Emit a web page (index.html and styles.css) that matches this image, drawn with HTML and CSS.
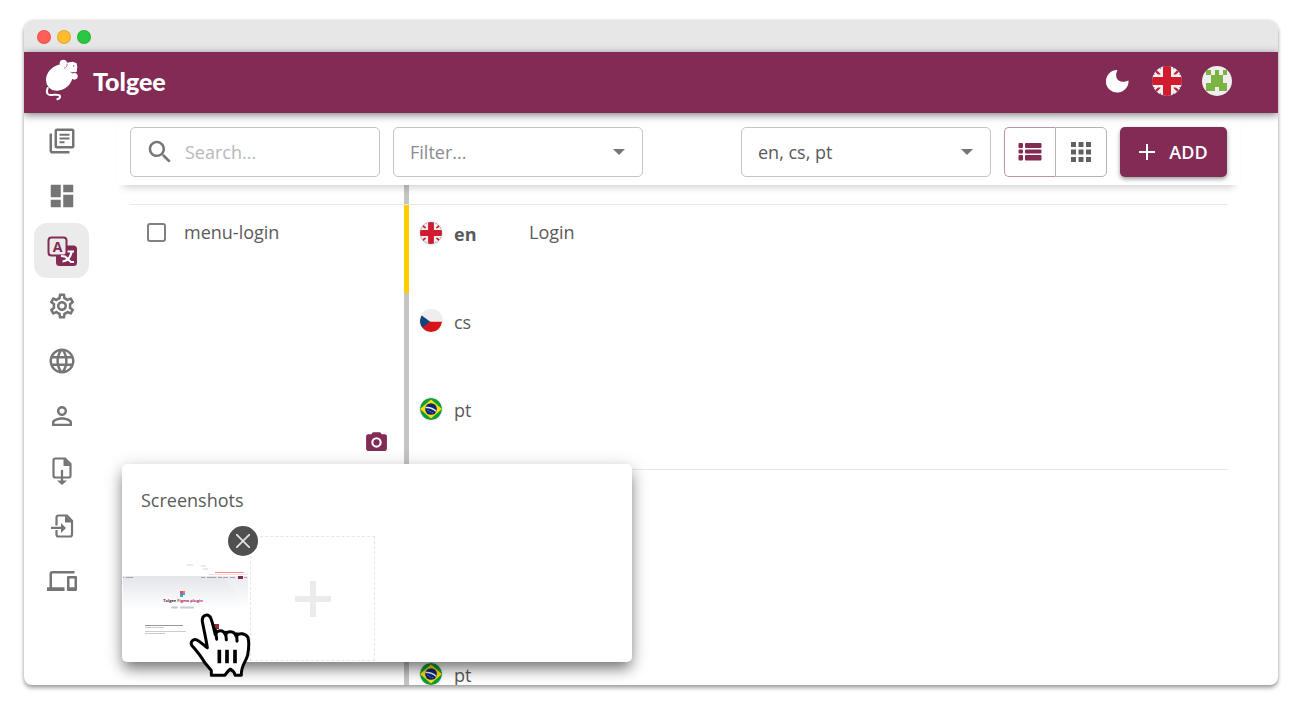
FILE: index.html
```html
<!DOCTYPE html>
<html lang="en">
<head>
<meta charset="utf-8">
<title>Tolgee</title>
<link rel="stylesheet" href="styles.css">
</head>
<body>
<svg class="defs" aria-hidden="true">
  <defs>
    <clipPath id="round"><circle cx="15" cy="15" r="15"/></clipPath>
    <symbol id="flag-gb" viewBox="0 0 30 30">
      <g clip-path="url(#round)">
        <rect width="30" height="30" fill="#0b3082"/>
        <path d="M0 0l30 30M30 0L0 30" stroke="#f0f0f0" stroke-width="8"/>
        <path d="M0 1l12 12M30 1L18 13M0 29l12-12M30 29L18 17" stroke="#d01c2e" stroke-width="2.4"/>
        <path d="M15 0v30M0 15h30" stroke="#f0f0f0" stroke-width="13"/>
        <path d="M15 0v30M0 15h30" stroke="#d01c2e" stroke-width="8"/>
      </g>
    </symbol>
    <symbol id="flag-cz" viewBox="0 0 30 30">
      <g clip-path="url(#round)">
        <rect width="30" height="30" fill="#eee"/>
        <path d="M0 16h30v14H0z" fill="#d7141a"/>
        <path d="M2 7l12 9L2 25H0V7z" fill="#11457e"/>
      </g>
    </symbol>
    <symbol id="flag-br" viewBox="0 0 30 30">
      <g clip-path="url(#round)">
        <rect width="30" height="30" fill="#0f9b3b"/>
        <path d="M15 2l15 13-15 13L0 15z" fill="#fedf00"/>
        <circle cx="15" cy="15" r="8" fill="#05247c"/>
        <path d="M7.500 13q8-1 14.500 5" stroke="#eee" stroke-width="2" fill="none"/>
        <path d="M10 17h2M13 19h2M16 20h2" stroke="#8fa0cc" stroke-width="1"/>
      </g>
    </symbol>
  </defs>
</svg>

<div class="window">
  <div class="chrome"><i class="dot red"></i><i class="dot amber"></i><i class="dot green"></i></div>

  <header class="appbar">
    <a class="brand" href="#">
      <svg class="mouse" viewBox="93 147 102 129" aria-hidden="true">
        <ellipse cx="136" cy="203" rx="43" ry="36" transform="rotate(-42 136 203)" fill="#fff"/>
        <path d="M146 168l12-10 18-3 12 5 2 10-2 16-14 2-8 14z" fill="#fff"/>
        <circle cx="148" cy="160" r="11" fill="#fff"/>
        <circle cx="181" cy="199" r="10" fill="#fff"/>
        <path d="M101 234c-6 16 0 23 14 21 12-1 20-3 23 3 1 5-1 8-8 10" fill="none" stroke="#fff" stroke-width="6" stroke-linecap="round"/>
        <path d="M159 161c2 7-3 12-9 14M170 187l12 1" fill="none" stroke="#822b55" stroke-width="2"/>
        <circle cx="179" cy="168" r="2" fill="#822b55"/>
      </svg>
      <span class="wordmark">Tolgee</span>
    </a>
    <div class="account">
      <button class="round-btn" aria-label="Dark mode">
        <svg viewBox="0 0 30 30"><path d="M15.500 4C12 10 15 19 26.500 14.500A11.300 11.300 0 1 1 15.500 4z" fill="#fff"/></svg>
      </button>
      <button class="round-btn" aria-label="Language"><svg viewBox="0 0 30 30"><use href="#flag-gb"/></svg></button>
      <button class="round-btn" aria-label="Account">
        <svg viewBox="0 0 30 30"><circle cx="15" cy="15" r="15" fill="#eee"/><path d="M4 4h5v5h4V4h4v5h4V4h4v5h-4v8h4v8h-8v-4h-4v4H4v-8h5V9H4z" fill="#7cb342"/></svg>
      </button>
    </div>
  </header>

  <div class="body">
    <nav class="sidebar">
      <a href="#" aria-label="Projects"><svg viewBox="0 0 24 24"><g fill="none" stroke="currentColor" stroke-width="2"><rect x="7" y="3" width="14" height="14" rx="1"/><path d="M3 6v13.500q0 1.500 1.500 1.500H18"/><path d="M10 7h8M10 10h8M10 13h4" stroke-width="1.600"/></g></svg></a>
      <a href="#" aria-label="Dashboard"><svg viewBox="0 0 24 24"><path d="M3 13h8V3H3v10zm0 8h8v-6H3v6zm10 0h8V11h-8v10zm0-18v6h8V3h-8z"/></svg></a>
      <a href="#" class="active" aria-label="Translations"><svg viewBox="0 0 30 30"><rect x="9" y="9.500" width="21" height="20.500" rx="3.500"/><rect x="1.500" y="1.500" width="18" height="18" rx="3" fill="#ebebeb" stroke="currentColor" stroke-width="2"/><text class="icon-letter" x="10.500" y="15.500" text-anchor="middle">A</text><path d="M20.500 15.500h6.500M14 20l4 .5 6 5.500h3M24.500 16c-1 5-4 9-9 9.500" fill="none" stroke="#fff" stroke-width="2.200"/></svg></a>
      <a href="#" aria-label="Settings"><svg viewBox="0 0 24 24"><path d="M19.430 12.980c.04-.32.07-.64.07-.98 0-.34-.03-.66-.07-.98l2.110-1.650c.19-.15.24-.42.12-.64l-2-3.460c-.09-.16-.26-.25-.44-.25-.06 0-.12.01-.17.03l-2.490 1c-.52-.4-1.080-.73-1.690-.98l-.38-2.650C14.460 2.180 14.250 2 14 2h-4c-.25 0-.46.18-.49.42l-.38 2.650c-.61.25-1.170.59-1.690.98l-2.490-1c-.06-.02-.12-.03-.18-.03-.17 0-.34.09-.43.25l-2 3.460c-.13.22-.07.49.12.64l2.110 1.650c-.04.32-.07.65-.07.98 0 .33.03.66.07.98l-2.110 1.650c-.19.15-.24.42-.12.64l2 3.460c.09.16.26.25.44.25.06 0 .12-.01.17-.03l2.490-1c.52.4 1.080.73 1.690.98l.38 2.650c.03.24.24.42.49.42h4c.25 0 .46-.18.49-.42l.38-2.650c.61-.25 1.170-.59 1.690-.98l2.490 1c.06.02.12.03.18.03.17 0 .34-.09.43-.25l2-3.460c.12-.22.07-.49-.12-.64l-2.110-1.650zm-1.980-1.710c.04.31.05.52.05.73 0 .21-.02.43-.05.73l-.14 1.130.89.7 1.080.84-.7 1.210-1.270-.51-1.040-.42-.9.68c-.43.32-.84.56-1.250.73l-1.060.43-.16 1.130-.2 1.350h-1.400l-.19-1.350-.16-1.130-1.060-.43c-.43-.18-.83-.41-1.230-.71l-.91-.7-1.060.43-1.270.51-.7-1.210 1.080-.84.89-.7-.14-1.130c-.03-.31-.05-.54-.05-.74s.02-.43.05-.73l.14-1.130-.89-.7-1.080-.84.7-1.210 1.270.51 1.040.42.9-.68c.43-.32.84-.56 1.250-.73l1.060-.43.16-1.130.2-1.350h1.390l.19 1.350.16 1.130 1.060.43c.43.18.83.41 1.230.71l.91.7 1.060-.43 1.270-.51.7 1.210-1.070.85-.89.7.14 1.130zM12 8c-2.210 0-4 1.790-4 4s1.790 4 4 4 4-1.790 4-4-1.790-4-4-4zm0 6c-1.100 0-2-.9-2-2s.9-2 2-2 2 .9 2 2-.9 2-2 2z"/></svg></a>
      <a href="#" aria-label="Languages"><svg viewBox="0 0 24 24"><path d="M11.990 2C6.470 2 2 6.480 2 12s4.470 10 9.990 10C17.520 22 22 17.520 22 12S17.520 2 11.990 2zm6.930 6h-2.950c-.32-1.250-.78-2.450-1.380-3.560 1.840.63 3.370 1.910 4.330 3.560zM12 4.040c.83 1.200 1.480 2.530 1.910 3.960h-3.820c.43-1.430 1.080-2.760 1.910-3.960zM4.260 14C4.100 13.360 4 12.690 4 12s.1-1.360.26-2h3.380c-.08.66-.14 1.320-.14 2 0 .68.06 1.340.14 2H4.260zm.82 2h2.950c.32 1.250.78 2.450 1.380 3.560-1.840-.63-3.370-1.900-4.330-3.560zm2.950-8H5.080c.96-1.660 2.490-2.930 4.330-3.560C8.810 5.550 8.350 6.750 8.030 8zM12 19.960c-.83-1.200-1.480-2.530-1.910-3.960h3.820c-.43 1.430-1.080 2.760-1.910 3.960zM14.340 14H9.660c-.09-.66-.16-1.320-.16-2 0-.68.07-1.350.16-2h4.680c.09.65.16 1.320.16 2 0 .68-.07 1.340-.16 2zm.25 5.560c.6-1.110 1.060-2.310 1.380-3.560h2.950c-.96 1.650-2.490 2.930-4.330 3.560zM16.360 14c.08-.66.14-1.320.14-2 0-.68-.06-1.340-.14-2h3.380c.16.64.26 1.310.26 2s-.1 1.360-.26 2h-3.380z"/></svg></a>
      <a href="#" aria-label="Members"><svg viewBox="0 0 24 24"><path d="M12 5.900c1.160 0 2.100.94 2.100 2.100s-.94 2.100-2.100 2.100S9.900 9.160 9.900 8s.94-2.100 2.100-2.100m0 9c2.970 0 6.100 1.460 6.100 2.100v1.100H5.900V17c0-.64 3.130-2.100 6.100-2.100M12 4C9.790 4 8 5.790 8 8s1.790 4 4 4 4-1.790 4-4-1.790-4-4-4zm0 9c-2.670 0-8 1.340-8 4v3h16v-3c0-2.660-5.330-4-8-4z"/></svg></a>
      <a href="#" aria-label="Export"><svg viewBox="0 0 30 30"><path d="M14 21.500H8.500q-2 0-2-2v-15q0-2 2-2h9.500l5.500 5.500v11.500q0 2-2 2H16" fill="none" stroke="currentColor" stroke-width="2.200"/><path d="M16.500 2v8H24zM13.900 14h2.200v10.500h4L15 29l-5-4.500h3.900z"/></svg></a>
      <a href="#" aria-label="Import"><svg viewBox="0 0 30 30"><path d="M9.500 14.500v-8q0-2 2-2h8.500l5 5.500v13.500q0 2-2 2H11.500q-2 0-2-2V19" fill="none" stroke="currentColor" stroke-width="2.200"/><path d="M18 4v7.500h7.500zM4 15.800h10V12l5 5-5 5v-4H4z"/></svg></a>
      <a href="#" aria-label="Developer"><svg viewBox="0 0 24 24"><path d="M4 6h18V4H4c-1.100 0-2 .9-2 2v11H0v3h14v-3H4V6zm19 2h-6c-.55 0-1 .45-1 1v10c0 .55.45 1 1 1h6c.55 0 1-.45 1-1V9c0-.55-.45-1-1-1zm-1 9h-4v-7h4v7z"/></svg></a>
    </nav>

    <main class="main">
      <div class="toolbar">
        <label class="field search">
          <svg viewBox="0 0 24 24" aria-hidden="true"><path d="M15.500 14h-.79l-.28-.27C15.410 12.590 16 11.110 16 9.500 16 5.910 13.090 3 9.500 3S3 5.910 3 9.500 5.910 16 9.500 16c1.610 0 3.090-.59 4.230-1.570l.27.28v.79l5 4.990L20.490 19l-4.990-5zm-6 0C7.010 14 5 11.990 5 9.500S7.010 5 9.500 5 14 7.010 14 9.500 11.990 14 9.500 14z"/></svg>
          <input type="text" placeholder="Search..." aria-label="Search">
        </label>
        <div class="field">
          <select class="muted" aria-label="Filter"><option>Filter...</option></select>
          <svg class="caret" viewBox="0 0 12 6" aria-hidden="true"><path d="M0 0h12L6 6z"/></svg>
        </div>
        <div class="field langs">
          <select aria-label="Languages"><option>en, cs, pt</option></select>
          <svg class="caret" viewBox="0 0 12 6" aria-hidden="true"><path d="M0 0h12L6 6z"/></svg>
        </div>
        <div class="toggle">
          <button class="on" aria-label="List view"><svg viewBox="0 0 24 20"><path d="M1.500 1H4q1 0 1 1v3q0 1-1 1H1.500q-1 0-1-1V2q0-1 1-1zm0 6.500H4q1 0 1 1v2q0 1-1 1H1.500q-1 0-1-1v-2q0-1 1-1zm0 5.500H4q1 0 1 1v3.500q0 1-1 1H1.500q-1 0-1-1V14q0-1 1-1zM8 1h14.500q1 0 1 1v3q0 1-1 1H8Q7 6 7 5V2q0-1 1-1zm0 6.500h14.500q1 0 1 1v2q0 1-1 1H8q-1 0-1-1v-2q0-1 1-1zM8 13h14.500q1 0 1 1v3.500q0 1-1 1H8q-1 0-1-1V14q0-1 1-1z"/></svg></button>
          <button aria-label="Grid view"><svg viewBox="0 0 24 20"><path d="M2 0h5v5H2zm7.500 0h5v5h-5zM17 0h5v5h-5zM2 7.500h5v5H2zm7.500 0h5v5h-5zm7.500 0h5v5h-5zM2 15h5v5H2zm7.500 0h5v5h-5zm7.500 0h5v5h-5z"/></svg></button>
        </div>
        <button class="add"><svg viewBox="0 0 16 16" aria-hidden="true"><path d="M8 0v16M0 8h16" stroke="#fff" stroke-width="2"/></svg>ADD</button>
      </div>

      <div class="list">
        <div class="row tail"><div class="key"></div><div class="cells"><div class="cell"></div></div></div>
        <div class="row">
          <div class="key">
            <label class="pick"><input type="checkbox"><span>menu-login</span></label>
            <button class="camera" aria-label="Screenshots"><svg viewBox="0 0 24 24"><path fill-rule="evenodd" d="M8.500 3L7 5H4c-1.100 0-2 .9-2 2v12c0 1.100.9 2 2 2h16c1.100 0 2-.9 2-2V7c0-1.100-.9-2-2-2h-3l-1.500-2zM12 7.900a5 5 0 1 1 0 10 5 5 0 0 1 0-10zm0 2a3 3 0 1 0 0 6 3 3 0 0 0 0-6z"/></svg></button>
          </div>
          <div class="cells">
            <div class="cell review"><svg class="flag"><use href="#flag-gb"/></svg><b class="code">en</b><span>Login</span></div>
            <div class="cell"><svg class="flag"><use href="#flag-cz"/></svg><span class="code">cs</span></div>
            <div class="cell"><svg class="flag"><use href="#flag-br"/></svg><span class="code">pt</span></div>
          </div>
        </div>
        <div class="row">
          <div class="key"></div>
          <div class="cells">
            <div class="cell"></div>
            <div class="cell"></div>
            <div class="cell"><svg class="flag"><use href="#flag-br"/></svg><span class="code">pt</span></div>
          </div>
        </div>
      </div>

      <section class="popover">
        <h2>Screenshots</h2>
        <div class="gallery">
          <div class="shot">
            <svg viewBox="0 0 125 125" role="img" aria-label="Tolgee Figma plugin">
              <defs><linearGradient id="sky" x1="0" y1="0" x2="0" y2="1"><stop offset="0" stop-color="#e3e5e9"/><stop offset="1" stop-color="#fff"/></linearGradient></defs>
              <path d="M64 29h6M78 30h5M80 33h5" stroke="#d5d5d5" stroke-width="1"/>
              <path d="M92 36.500h29" stroke="#f58b8b" stroke-width="1"/><path d="M86 38.500h39" stroke="#fbdada" stroke-width="1"/>
              <rect y="40" width="125" height="33" fill="url(#sky)"/>
              <path d="M98 40h27v30H117Q112 50 98 40z" fill="#fff" opacity=".25"/>
              <path d="M0 41.500h1M3 41.500h7M78 41.500h4M84 41.500h9M95 41.500h4M100 41.500h5M107 41.500h5M121 41.500h3" stroke="#a7a3ab" stroke-width="1"/>
              <rect x="115" y="40" width="5" height="3" fill="#822b55"/>
              <path d="M57 55h3v2h-3z" fill="#f24e1e"/><path d="M60 55h2v2h-2z" fill="#ff7262"/><path d="M57 57h3v2h-3z" fill="#a259ff"/><path d="M60 57h2v2h-2z" fill="#1abcfe"/><path d="M57 59h3v2h-3z" fill="#0acf83"/>
              <text class="thumb-title" x="60" y="66" text-anchor="middle">Tolgee <tspan fill="#b32968">Figma plugin</tspan></text>
              <path d="M49 71.500h5M58 71.500h12" stroke="#c9cad0" stroke-width="2" stroke-linecap="round"/>
              <path d="M22 89.500h38" stroke="#999" stroke-width="1"/><path d="M22 91.500h19M22 95.500h41M22 97.500h20" stroke="#ccc" stroke-width="1"/>
              <rect x="91" y="88" width="5" height="5" fill="#8d3038"/>
            </svg>
            <button class="remove" aria-label="Remove screenshot"><svg viewBox="0 0 14 14"><path d="M0 0l14 14M14 0L0 14" stroke="#e2e2e2" stroke-width="1.800"/></svg></button>
            <svg class="pointer" viewBox="266 488 186 194" aria-hidden="true">
              <path d="M333 677v-14l-20-24c-10-18-21-32-39-52-5-10 5-20 15-16 12 5 22 18 32 24-4-28-11-57-15-80-2-17 16-26 25-10 6 14 10 36 14 51 3-15 24-18 30 0 5-13 27-13 32 4 8-12 29-9 36 4 4 16 2 36-1 53-5 20-20 30-19 60h-19c-1-8-5-13-14-18-7 4-10 10-16 18z" fill="#fff" stroke="#000" stroke-width="9" stroke-linejoin="round"/>
              <path d="M345 540l4 29M376 548l2 23M409 553l1 22" stroke="#000" stroke-width="9" stroke-linecap="round"/>
              <path d="M357 601v40M380 601v40M404 601v40" stroke="#000" stroke-width="11"/>
            </svg>
          </div>
          <button class="dropzone" aria-label="Add screenshot"><svg viewBox="0 0 36 36"><path d="M18 0v36M0 18h36" stroke="#ebebeb" stroke-width="6"/></svg></button>
        </div>
      </section>
    </main>
  </div>
</div>
</body>
</html>
```
FILE: styles.css
```css
* { box-sizing: border-box; }

body {
  margin: 0;
  height: 100vh;
  padding: 20px 24px 28px;
  display: flex;
  background: #fff;
  color: #5a5a5a;
  font-family: "Open Sans", "Noto Sans", sans-serif;
  font-size: 18px;
  line-height: 28px;
}

button, input, select { font: inherit; color: inherit; margin: 0; }
button { padding: 0; border: 0; background: none; cursor: pointer; }
svg { display: block; fill: currentColor; }
.defs { position: absolute; width: 0; height: 0; }

.window {
  flex: 1;
  min-width: 0;
  display: flex;
  flex-direction: column;
  overflow: hidden;
  border-radius: 10px 10px 8px 8px;
  background: #fff;
  box-shadow: 0 3px 4px rgba(0, 0, 0, .35), 0 0 3px rgba(0, 0, 0, .12);
}

.chrome {
  flex: none;
  height: 32px;
  padding: 2px 13px 0;
  display: flex;
  align-items: center;
  gap: 6px;
  background: #e7e7e7;
}
.dot { width: 14px; height: 14px; border-radius: 50%; border: 1px solid rgba(0, 0, 0, .1); }
.red { background: #ff5f57; }
.amber { background: #febc2e; }
.green { background: #28c840; }

.appbar {
  flex: none;
  position: relative;
  z-index: 3;
  height: 61px;
  padding: 0 46px 4px 21px;
  display: flex;
  align-items: center;
  justify-content: space-between;
  background: #822b55;
  box-shadow: 0 2px 8px rgba(0, 0, 0, .5);
}
.brand { display: flex; align-items: center; gap: 14px; color: #fff; text-decoration: none; }
.mouse { width: 34px; height: 43px; }
.wordmark { font-family: Lato, sans-serif; font-weight: 900; font-size: 25px; }
.account { display: flex; gap: 20px; }
.round-btn, .round-btn svg { width: 30px; height: 30px; }

.body { flex: 1; min-height: 0; display: flex; }

.sidebar { flex: none; padding-left: 10px; color: #757575; }
.sidebar a {
  width: 55px;
  height: 55px;
  display: grid;
  place-items: center;
  border-radius: 13px;
  color: inherit;
}
.sidebar svg { width: 30px; height: 30px; }
.sidebar .active { background: #ebebeb; color: #822b55; }
.icon-letter { font-size: 14px; font-weight: 700; }

.main {
  flex: 1;
  min-width: 0;
  position: relative;
  margin: 0 38px 0 28px;
  display: flex;
  flex-direction: column;
}

.toolbar {
  flex: none;
  position: relative;
  z-index: 1;
  padding: 14px 13px 8px;
  display: flex;
  gap: 13px;
  background: #fff;
  box-shadow: 0 8px 8px -6px rgba(0, 0, 0, .2);
}
.field {
  flex: 0 1 250px;
  min-width: 0;
  height: 50px;
  display: flex;
  align-items: center;
  border: 1px solid #c4c4c4;
  border-radius: 5px;
}
.search { padding-left: 14px; gap: 10px; color: #757575; }
.search svg { flex: none; width: 30px; height: 30px; }
.search input { width: 100%; border: 0; outline: 0; padding: 0; background: none; color: #5a5a5a; }
.search input::placeholder { color: #b8b8b8; opacity: 1; }
.field select {
  flex: 1;
  min-width: 0;
  height: 48px;
  padding: 0 0 0 16px;
  border: 0;
  outline: 0;
  appearance: none;
  background: none;
}
.field .muted { color: #8b8b90; }
.caret { flex: none; width: 12px; height: 6px; margin: 0 17px; color: #757575; }
.langs { margin-left: auto; }

.toggle { flex: none; display: flex; }
.toggle button {
  width: 52px;
  height: 50px;
  display: grid;
  place-items: center;
  border: 1px solid #b4b4b4;
  border-radius: 0 5px 5px 0;
  color: #616161;
}
.toggle .on { width: 51px; border-color: #c393aa; border-right: 0; border-radius: 5px 0 0 5px; color: #822b55; }
.toggle svg { width: 24px; height: 20px; }

.add {
  flex: none;
  width: 107px;
  height: 50px;
  display: flex;
  align-items: center;
  justify-content: center;
  gap: 14px;
  border-radius: 5px;
  background: #822b55;
  color: #fff;
  font-weight: 600;
  box-shadow: 0 2px 4px rgba(0, 0, 0, .4);
}
.add svg { width: 16px; height: 16px; }

.list { flex: 1; min-height: 0; overflow: hidden; padding: 0 12px 0 13px; }
.row { display: grid; grid-template-columns: 274px 1fr; border-bottom: 1px solid #e8e8e8; }
.key { padding: 13px 15px 15px 17px; display: flex; flex-direction: column; justify-content: space-between; }
.pick { display: flex; align-items: center; gap: 18px; }
.pick input {
  appearance: none;
  width: 19px;
  height: 19px;
  border: 2px solid #808080;
  border-radius: 3px;
}
.camera { align-self: flex-end; color: #822b55; }
.camera svg { width: 25px; height: 25px; }
.cell {
  height: 88px;
  padding: 13px 11px;
  display: flex;
  align-items: flex-start;
  border-left: 5px solid #c4c4c4;
}
.review { border-color: #ffce00; }
.tail .key { padding: 0; }
.tail .cell { height: 19px; padding: 0; }
.flag { flex: none; width: 22px; height: 22px; margin: 4px 12px 0 0; border-radius: 50%; box-shadow: 0 0 2px rgba(0, 0, 0, .25); }
.code { width: 75px; padding-top: 2px; }

.popover {
  position: absolute;
  z-index: 2;
  left: 5px;
  top: 351px;
  width: 510px;
  padding: 24px 1px 1px;
  border-radius: 5px;
  background: #fff;
  box-shadow: 0 8px 14px -2px rgba(0, 0, 0, .45), 0 4px 20px rgba(0, 0, 0, .2);
}
.popover h2 { margin: 0 18px 24px; font-size: 18px; line-height: 24px; font-weight: 400; }
.gallery { display: flex; gap: 2px; }
.shot { position: relative; width: 125px; height: 125px; }
.thumb-title { font-size: 4px; font-weight: 700; fill: #4a1d38; }
.dropzone {
  width: 125px;
  height: 125px;
  display: grid;
  place-items: center;
  border: 1px dashed #e6e6e6;
}
.dropzone svg { width: 36px; height: 36px; }
.remove {
  position: absolute;
  top: -10px;
  right: -10px;
  width: 30px;
  height: 30px;
  display: grid;
  place-items: center;
  border-radius: 50%;
  background: #505050;
}
.remove svg { width: 14px; height: 14px; }
.pointer { position: absolute; left: 66px; top: 76px; width: 62px; height: 65px; }
```
